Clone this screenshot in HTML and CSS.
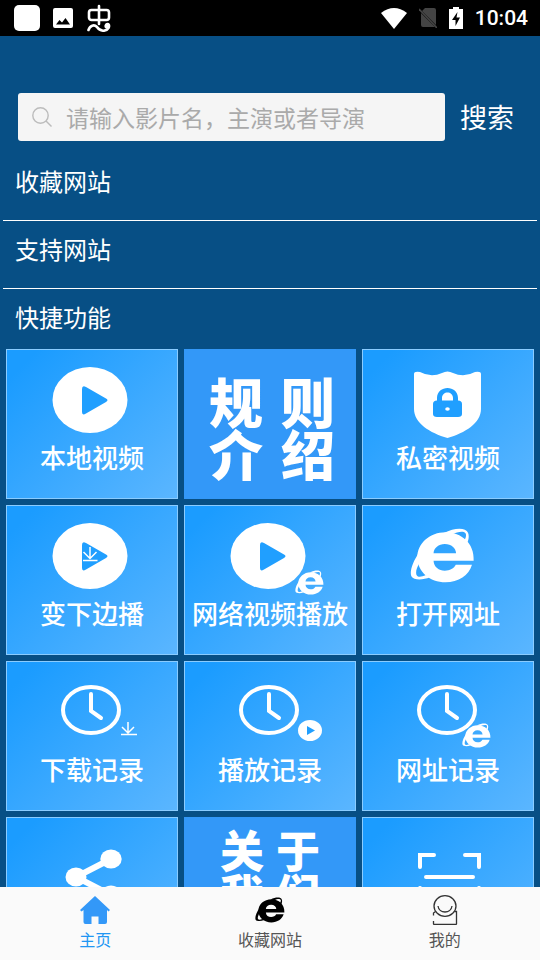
FILE: index.html
```html
<!DOCTYPE html>
<html lang="zh-CN">
<head>
<meta charset="utf-8">
<meta name="viewport" content="width=device-width, initial-scale=1">
<title>主页</title>
<link rel="stylesheet" href="styles.css">
</head>
<body>
<svg class="defs" aria-hidden="true">
  <symbol id="ie" viewBox="150 84 196 166">
    <path fill-rule="evenodd" d="M342 183H221C222 202 237 213 255 213C270 213 283 206 288 195H337C328 227 296 248 257 248C210 248 172 215 172 173C172 130 210 97 257 97C305 97 345 130 342 183ZM221 160H289C288 144 275 132 255 132C236 132 222 144 221 160Z"/>
    <path d="M252 99C285 82 318 82 325 98C329 108 327 119 322 130L314 122C321 108 321 99 312 96C303 94 290 97 276 103ZM180 154C158 185 148 215 154 230C162 243 190 241 210 233L198 226C182 233 172 233 169 224C167 214 170 205 180 186Z"/>
  </symbol>
  <symbol id="disc" viewBox="0 0 76 66">
    <ellipse cx="38" cy="33" rx="37.500" ry="33"/>
    <path class="cut" d="M30 22Q30 18 34 20L54 31.500Q57 33 54 35L34 46.500Q30 49 30 45Z"/>
  </symbol>
  <symbol id="clock" viewBox="0 0 60 50">
    <ellipse class="line4" cx="30" cy="25" rx="28" ry="23"/>
    <path class="line4" d="M30 9V26L40 33"/>
  </symbol>
</svg>

<div class="app">
  <header class="status">
    <div class="status-side">
      <svg width="26" height="26" viewBox="0 0 26 26"><rect width="26" height="26" rx="5" fill="#fff"/></svg>
      <svg width="20" height="20" viewBox="0 0 20 20"><path fill="#fff" fill-rule="evenodd" d="M2 0H18Q20 0 20 2V18Q20 20 18 20H2Q0 20 0 18V2Q0 0 2 0ZM3 16.500H17L12.500 10L9 14.500L6.500 12Z"/></svg>
      <svg width="26" height="28" viewBox="0 0 26 28"><g fill="none" stroke="#fff" stroke-width="2.600" stroke-linecap="round"><rect x="3" y="6" width="20" height="10" rx="2.500"/><path d="M13 2V20M2.500 26C4 21.500 8 20 11 23C14 27.500 20 28 22.500 24C24 21 22 19 20.500 20.500"/></g><circle cx="21" cy="22" r="2.600" fill="#fff"/></svg>
    </div>
    <div class="status-side status-right">
      <svg width="26" height="21" viewBox="0 0 26 21"><path fill="#fff" d="M13 21L0 5Q13 -5 26 5Z"/></svg>
      <svg width="18" height="20" viewBox="0 0 18 20"><path fill="#444" d="M6 0H15Q17 0 17 2V17L3 3ZM2 5L16 19H4Q2 19 2 17Z"/><path stroke="#444" stroke-width="1.600" d="M0 1L18 20"/></svg>
      <svg width="14" height="22" viewBox="0 0 14 22"><path fill="#fff" fill-rule="evenodd" d="M4 0H10V2H14V22H0V2H4ZM8.500 5L3 13H6.500V19L11 10.500H7.500Z"/></svg>
      <span class="time">10:04</span>
    </div>
  </header>

  <main class="content">
    <form class="search">
      <label class="search-box">
        <svg width="20" height="20" viewBox="0 0 20 20" fill="none" stroke="#bcbcbc" stroke-width="1.400"><circle cx="8.500" cy="8.500" r="7.700"/><path d="M14 14L19.500 19.500"/></svg>
        <input type="text" placeholder="请输入影片名，主演或者导演" aria-label="搜索影片">
      </label>
      <button class="search-btn" type="button">搜索</button>
    </form>

    <h2 class="section ruled">收藏网站</h2>
    <h2 class="section ruled">支持网站</h2>
    <h2 class="section">快捷功能</h2>

    <div class="grid">
      <button class="tile" type="button">
        <svg class="art" viewBox="0 0 172 92"><use href="#disc" x="46" y="18" width="76" height="66"/></svg>
        <span class="name">本地视频</span>
      </button>
      <button class="tile flat rules" type="button"><span>规</span><span>则</span><span>介</span><span>绍</span></button>
      <button class="tile" type="button">
        <svg class="art" viewBox="0 0 172 92"><path d="M52 25Q52 22 58 23Q69 29 80 24Q85.500 21 91 24Q102 29 113 23Q119 22 119 25V60C119 74 103 84 85.500 89C68 84 52 74 52 60Z"/><path class="cut" fill-rule="evenodd" d="M75 51.500V49C75 35.500 96 35.500 96 49V51.500Q100 51.500 100 55V65Q100 68 96 68H75Q71 68 71 65V55Q71 51.500 75 51.500ZM80 51.500H91V49C91 41.500 80 41.500 80 49Z"/><ellipse cx="85.500" cy="60" rx="2.300" ry="1.800"/></svg>
        <span class="name">私密视频</span>
      </button>
      <button class="tile" type="button">
        <svg class="art" viewBox="0 0 172 92"><use href="#disc" x="46" y="18" width="76" height="66"/><path class="line15" d="M84 42V53M77.500 47L84 53.500L90.500 47M77 55.500H91.500"/></svg>
        <span class="name">变下边播</span>
      </button>
      <button class="tile" type="button">
        <svg class="art" viewBox="0 0 172 92"><use href="#disc" x="46" y="18" width="76" height="66"/><use href="#ie" x="111" y="65" width="29" height="25"/></svg>
        <span class="name">网络视频播放</span>
      </button>
      <button class="tile" type="button">
        <svg class="art" viewBox="0 0 172 92"><use href="#ie" x="48" y="23" width="65" height="55"/></svg>
        <span class="name">打开网址</span>
      </button>
      <button class="tile" type="button">
        <svg class="art" viewBox="0 0 172 92"><use href="#clock" x="55" y="24" width="60" height="50"/><path class="line15" d="M122 61V72M116 66L122 72L128 66M115 73.500H131"/></svg>
        <span class="name">下载记录</span>
      </button>
      <button class="tile" type="button">
        <svg class="art" viewBox="0 0 172 92"><use href="#clock" x="55" y="24" width="60" height="50"/><ellipse cx="126" cy="69.500" rx="12" ry="10.500"/><path class="cut" d="M123 65V74L131 69.500Z"/></svg>
        <span class="name">播放记录</span>
      </button>
      <button class="tile" type="button">
        <svg class="art" viewBox="0 0 172 92"><use href="#clock" x="55" y="24" width="60" height="50"/><use href="#ie" x="100" y="62" width="29" height="25"/></svg>
        <span class="name">网址记录</span>
      </button>
      <button class="tile" type="button" aria-label="分享">
        <svg class="art" viewBox="0 0 172 92"><path class="line6" d="M105 42L70 60L105 78"/><ellipse cx="70" cy="60" rx="10.500" ry="9.500"/><ellipse cx="105" cy="42" rx="10.700" ry="9.500"/><ellipse cx="105" cy="78" rx="10.700" ry="9.500"/></svg>
      </button>
      <button class="tile flat about" type="button"><span>关</span><span>于</span><span>我</span><span>们</span></button>
      <button class="tile" type="button" aria-label="扫一扫">
        <svg class="art" viewBox="0 0 172 92"><path class="line4" d="M58 50V38H72M103 38H117V50M58 71V82H72M103 82H117V71M64 60H111"/></svg>
      </button>
    </div>
  </main>

  <nav class="tabs">
    <a class="tab active" href="#home">
      <svg width="30" height="30" viewBox="0 0 30 30"><path fill="#3398f8" d="M15 1L30 15L28.500 16.500L27 15V27Q27 29 25 29H18.500V21.500H11.500V29H5.500Q3.500 29 3.500 27V15L1.500 16.500L0 15Z"/></svg>
      <span>主页</span>
    </a>
    <a class="tab" href="#sites">
      <svg width="30" height="30" viewBox="0 0 30 30"><use href="#ie" x="0" y="1" width="30" height="28"/></svg>
      <span>收藏网站</span>
    </a>
    <a class="tab" href="#mine">
      <svg width="30" height="30" viewBox="0 0 30 30" fill="none" stroke="#333" stroke-width="1.300"><ellipse cx="15" cy="11" rx="11" ry="10.300"/><path d="M8 11C9 19 21 19 22 11M5.500 16.500L3.500 18V20.500M24.500 16.500H26.500V29Q26.500 29.300 26 29.300H4Q3.500 29.300 3.500 29V26"/></svg>
      <span>我的</span>
    </a>
  </nav>
</div>
</body>
</html>
```
FILE: styles.css
```css
* {
  box-sizing: border-box;
}

body {
  margin: 0;
  background: #074f85;
  color: #fff;
  font-family: "Noto Sans CJK SC", sans-serif;
}

button,
input {
  margin: 0;
  padding: 0;
  border: 0;
  background: none;
  color: inherit;
  font: inherit;
}

.defs {
  position: absolute;
  width: 0;
  height: 0;
}

.app {
  display: flex;
  flex-direction: column;
  height: 100vh;
}

.status {
  display: flex;
  flex: none;
  justify-content: space-between;
  height: 36px;
  padding: 0 12px 0 14px;
  background: #000;
}

.status-side {
  display: flex;
  align-items: center;
  gap: 13px;
}

.status-right {
  gap: 12px;
}

.time {
  font: 500 21px/36px Roboto, sans-serif;
}

.content {
  flex: 1;
  min-height: 0;
  overflow-y: auto;
  scrollbar-width: none;
}

.search {
  display: flex;
  padding: 57px 18px 10px;
}

.search-box {
  display: flex;
  flex: 1;
  align-items: center;
  gap: 14px;
  min-width: 0;
  height: 48px;
  padding: 0 14px;
  border-radius: 3px;
  background: #f5f5f5;
}

.search-box svg {
  flex: none;
}

.search-box input {
  flex: 1;
  min-width: 0;
  color: #333;
  font-size: 23px;
  line-height: 34px;
  outline: 0;
}

.search-box input::placeholder {
  color: #aaa;
  opacity: 1;
}

.search-btn {
  width: 77px;
  padding-left: 7px;
  font-size: 27px;
  line-height: 46px;
}

.section {
  margin: 0 3px;
  padding: 0 12px 2px;
  font-size: 24px;
  font-weight: 400;
  line-height: 60px;
}

.ruled {
  padding-bottom: 9px;
  border-bottom: 1px solid #fff;
}

.ruled + .section {
  margin-top: -2px;
}

.grid {
  display: grid;
  grid-template-columns: repeat(3, 1fr);
  gap: 6px;
  padding: 0 6px 6px;
}

.tile {
  display: flex;
  flex-direction: column;
  min-height: 150px;
  background: linear-gradient(135deg, #1b9cff 10%, #5bb6ff);
  box-shadow: inset 0 0 0 1px #8accff;
  overflow: hidden;
}

.art {
  display: block;
  width: 100%;
  fill: #fff;
}

.cut {
  fill: #209fff;
}

.line15,
.line4,
.line6 {
  fill: none;
  stroke: #fff;
  stroke-width: 1.5px;
}

.line4 {
  stroke-width: 4px;
  stroke-linecap: round;
}

.line6 {
  stroke-width: 6px;
}

.name {
  width: 100%;
  font-size: 26px;
  font-weight: 500;
  line-height: 32px;
  text-align: center;
  white-space: nowrap;
}

.flat {
  display: grid;
  grid-template-columns: auto auto;
  align-content: start;
  justify-content: center;
  background: #3398f8;
  box-shadow: none;
  font-weight: 900;
}

.rules {
  column-gap: 18px;
  padding: 26px 0 0 4px;
  font-size: 54px;
  line-height: 52px;
}

.about {
  column-gap: 12px;
  padding-top: 10px;
  font-size: 44px;
  line-height: 44px;
}

.tabs {
  display: grid;
  flex: none;
  grid-template-columns: repeat(3, 1fr);
  padding: 8px 8px 9px;
  background: #fafafa;
}

.tab {
  display: flex;
  flex-direction: column;
  align-items: center;
  gap: 2px;
  color: #555;
  font-size: 16px;
  line-height: 24px;
  text-decoration: none;
}

.tab svg {
  fill: #000;
}

.tab:last-child svg {
  fill: none;
}

.tab.active {
  color: #2196f3;
}
```
